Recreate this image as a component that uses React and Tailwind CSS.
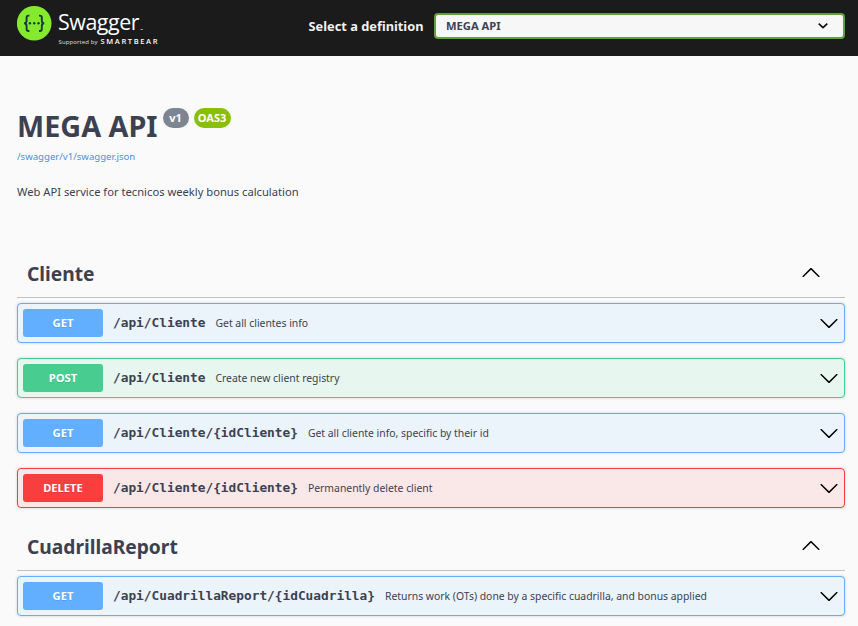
const METHOD_STYLES = {
  GET: { row: 'border-[#61affe] bg-[#ebf3fb]', badge: 'bg-[#61affe]' },
  POST: { row: 'border-[#49cc90] bg-[#e8f6f0]', badge: 'bg-[#49cc90]' },
  DELETE: { row: 'border-[#f93e3e] bg-[#fae7e7]', badge: 'bg-[#f93e3e]' },
};

const SECTIONS = [
  {
    name: 'Cliente',
    operations: [
      { method: 'GET', path: '/api/Cliente', summary: 'Get all clientes info' },
      { method: 'POST', path: '/api/Cliente', summary: 'Create new client registry' },
      { method: 'GET', path: '/api/Cliente/{idCliente}', summary: 'Get all cliente info, specific by their id' },
      { method: 'DELETE', path: '/api/Cliente/{idCliente}', summary: 'Permanently delete client' },
    ],
  },
  {
    name: 'CuadrillaReport',
    operations: [
      {
        method: 'GET',
        path: '/api/CuadrillaReport/{idCuadrilla}',
        summary: 'Returns work (OTs) done by a specific cuadrilla, and bonus applied',
      },
    ],
  },
];

function Arrow({ up = false }) {
  return (
    <svg className="size-5 shrink-0" viewBox="0 0 20 20" fill="#000">
      {up ? (
        <path d="M17.418 14.908c.272.268.709.268.979 0s.271-.701 0-.969l-7.908-7.83c-.27-.268-.707-.268-.979 0l-7.908 7.83c-.27.268-.27.701 0 .969.271.268.709.268.979 0L10 7.767l7.418 7.141z" />
      ) : (
        <path d="M17.418 6.109c.272-.268.709-.268.979 0s.271.701 0 .969l-7.908 7.83c-.27.268-.707.268-.979 0l-7.908-7.83c-.27-.268-.27-.701 0-.969.271-.268.709-.268.979 0L10 13.25l7.418-7.141z" />
      )}
    </svg>
  );
}

function Logo() {
  return (
    <svg className="block h-[56px] w-[150px]" viewBox="17 0 150 56">
      <circle cx="34.2" cy="23.3" r="17.3" fill="#85ea2d" />
      <g fill="none" stroke="#173647" strokeWidth="1.9">
        <path d="M29.4 15.6h-.9q-1.9 0-1.9 1.900v3q0 2.800-2.500 2.800q2.500 0 2.500 2.800v3q0 1.900 1.900 1.900h.9" />
        <path d="M39 15.6h.9q1.9 0 1.9 1.900v3q0 2.800 2.500 2.800q-2.500 0-2.500 2.800v3q0 1.900-1.900 1.900h-.9" />
      </g>
      <g fill="#173647">
        <circle cx="29.9" cy="23.3" r="1.2" />
        <circle cx="34.2" cy="23.3" r="1.2" />
        <circle cx="38.5" cy="23.3" r="1.2" />
      </g>
      <g fill="#fff" fontFamily="'Open Sans', sans-serif">
        <text x="58" y="30" fontSize="22.3" letterSpacing="-0.5" textLength="81" lengthAdjust="spacingAndGlyphs">Swagger</text>
        <rect x="140.5" y="29" width="2.5" height="0.8" opacity="0.7" />
        <text x="58.5" y="44" fontSize="6" textLength="39" opacity="0.85">Supported by</text>
        <text x="100.5" y="44" fontSize="7.5" fontWeight="600" textLength="57">SMARTBEAR</text>
      </g>
    </svg>
  );
}

function Operation({ method, path, summary }) {
  const style = METHOD_STYLES[method];
  return (
    <div className={`flex h-10 items-center rounded-[4px] border px-[5px] shadow-[0_0_3px_rgba(0,0,0,0.19)] ${style.row}`}>
      <span className={`flex h-7 w-20 shrink-0 items-center justify-center rounded-[3px] text-[11.2px] font-bold text-white [text-shadow:0_1px_0_rgba(0,0,0,0.1)] ${style.badge}`}>
        {method}
      </span>
      <span className="ml-[10px] shrink-0 font-['DejaVu_Sans_Mono',monospace] text-[12.8px] font-bold">{path}</span>
      <span className="ml-[10px] flex-1 pt-[2px] text-[10.4px]">{summary}</span>
      <Arrow />
    </div>
  );
}

function Section({ name, operations }) {
  return (
    <section>
      <div className="flex h-[50px] items-center justify-between border-b border-[rgba(59,65,81,0.3)] pr-6 pl-[10px]">
        <h3 className="pt-[3px] text-[19.2px] font-bold">{name}</h3>
        <span className="pb-[2px]">
          <Arrow up />
        </span>
      </div>
      <div className="flex flex-col gap-[15px] pt-[5px]">
        {operations.map((op) => (
          <Operation key={op.method + op.path} {...op} />
        ))}
      </div>
    </section>
  );
}

export default function App() {
  return (
    <div className="h-[626px] overflow-hidden bg-[#fafafa] font-['Noto_Sans',sans-serif] text-[#3b4151]">
      <header className="flex h-14 items-center justify-between bg-[#1b1b1b] pr-[13px] pl-[17px]">
        <Logo />
        <label className="flex items-center pb-1 text-[12.8px] font-bold text-[#f0f0f0]">
          <span className="pt-[2px]">Select a definition</span>
          <span className="ml-[10.5px] flex h-[26px] w-[411px] items-center justify-between rounded-[4px] border-2 border-[#62a03f] bg-[#f7f7f7] pr-[14px] pl-[10px] text-[11.2px] text-[#3b4151]">
            MEGA API
            <svg className="h-3 w-3" viewBox="0 0 12 12" fill="none" stroke="#111" strokeWidth="1.7">
              <path d="M1.7 3.6 6 7.7l4.3-4.1" />
            </svg>
          </span>
        </label>
      </header>
      <main className="pr-[13px] pl-[17px]">
        <div className="flex h-[192px] flex-col items-start pt-[50px]">
          <div className="flex items-start">
            <h2 className="text-[28.8px] leading-[40px] font-bold">MEGA API</h2>
            <span className="mt-[2px] ml-[5px] flex h-5 w-[26px] items-center justify-center rounded-full bg-[#7d8492] text-[11px] font-bold text-white">v1</span>
            <span className="mt-[2px] ml-[5px] flex h-5 w-[37px] items-center justify-center rounded-full bg-[#89bf04] text-[11px] font-bold text-white">OAS3</span>
          </div>
          <a className="mt-[4px] text-[9.6px] leading-[14px] text-[#4990e2]">/swagger/v1/swagger.json</a>
          <p className="mt-[20px] text-[11.2px] leading-4">Web API service for tecnicos weekly bonus calculation</p>
        </div>
        <div className="flex flex-col gap-[13px]">
          {SECTIONS.map((section) => (
            <Section key={section.name} {...section} />
          ))}
        </div>
      </main>
    </div>
  );
}
